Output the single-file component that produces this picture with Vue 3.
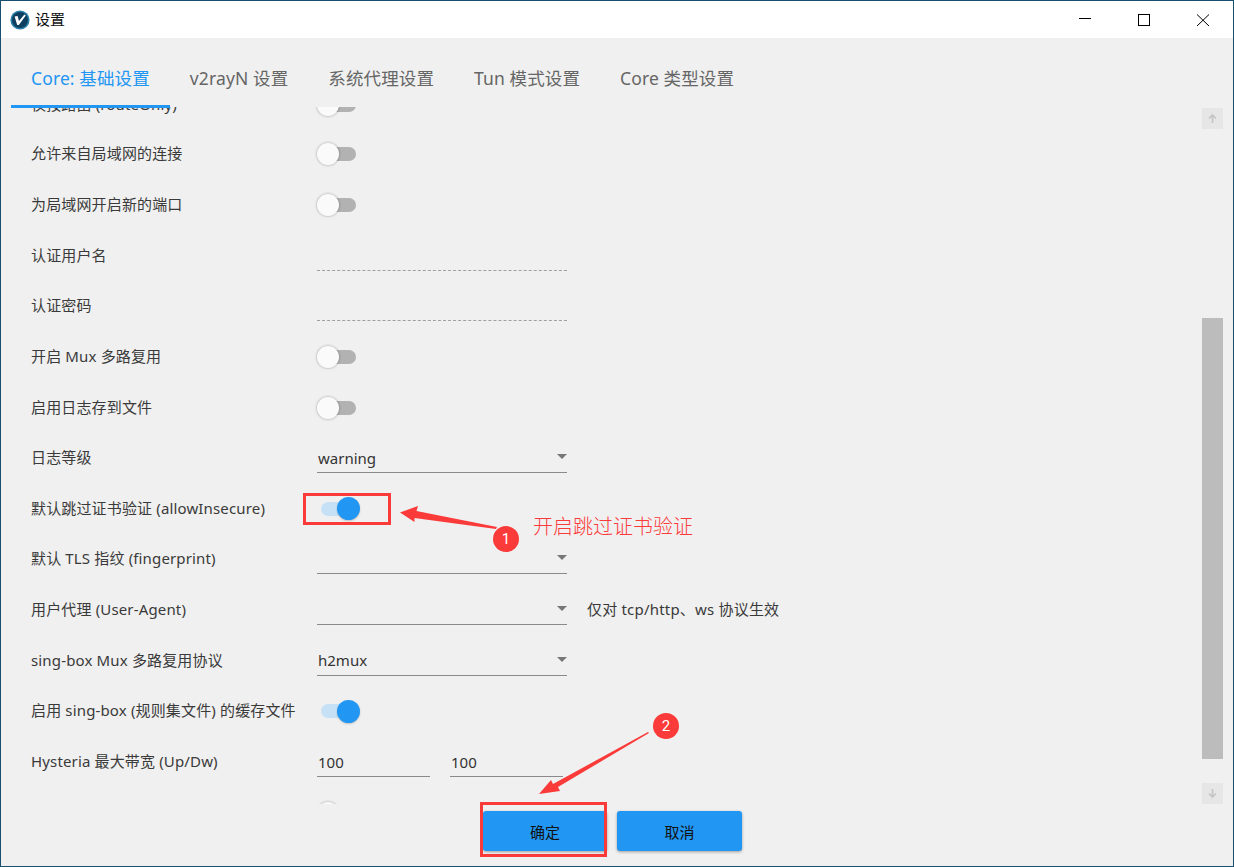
<script setup>
const tabs = ['Core: 基础设置', 'v2rayN 设置', '系统代理设置', 'Tun 模式设置', 'Core 类型设置']
const rows = [
  { label: '仅按路由 (routeOnly)', type: 'toggle', first: true },
  { label: '允许来自局域网的连接', type: 'toggle' },
  { label: '为局域网开启新的端口', type: 'toggle' },
  { label: '认证用户名', type: 'dashed' },
  { label: '认证密码', type: 'dashed' },
  { label: '开启 Mux 多路复用', type: 'toggle' },
  { label: '启用日志存到文件', type: 'toggle' },
  { label: '日志等级', type: 'select', value: 'warning' },
  { label: '默认跳过证书验证 (allowInsecure)', type: 'toggle', on: true },
  { label: '默认 TLS 指纹 (fingerprint)', type: 'select', value: '' },
  { label: '用户代理 (User-Agent)', type: 'select', value: '', note: '仅对 tcp/http、ws 协议生效' },
  { label: 'sing-box Mux 多路复用协议', type: 'select', value: 'h2mux' },
  { label: '启用 sing-box (规则集文件) 的缓存文件', type: 'toggle', on: true },
  { label: 'Hysteria 最大带宽 (Up/Dw)', type: 'pair', a: '100', b: '100' },
  { label: '', type: 'toggle' }
]
</script>

<template>
  <div class="window">
    <header class="titlebar">
      <svg class="logo" width="20" height="20" viewBox="0 0 20 20">
        <circle cx="10" cy="10" r="9.6" fill="#2a7fa8" />
        <circle cx="10" cy="10" r="8" fill="#0e3f60" />
        <path d="M4.6 6.6 L7.6 6 L9 11 L14.4 4.6 L15.8 5.6 L8.8 15 L7.2 15 Z" fill="#fff" />
      </svg>
      <span class="title">设置</span>
      <div class="controls">
        <svg width="14" height="14" viewBox="0 0 14 14" class="ctl-min"><path d="M1 5.5H13" stroke="#000" stroke-width="1" /></svg>
        <svg width="14" height="14" viewBox="0 0 14 14" class="ctl-max"><rect x="1.5" y="1.5" width="11" height="11" fill="none" stroke="#000" stroke-width="1" /></svg>
        <svg width="14" height="14" viewBox="0 0 14 14" class="ctl-close"><path d="M1 1.5L13 13M13 1.5L1 13" stroke="#000" stroke-width="1" /></svg>
      </div>
    </header>

    <nav class="tabs">
      <div v-for="(t, i) in tabs" :key="t" class="tab" :class="{ active: i === 0 }">{{ t }}</div>
    </nav>

    <main class="main">
      <div class="viewport">
        <div class="list">
          <div v-for="(r, i) in rows" :key="i" class="row" :class="{ first: r.first }">
            <div class="label">{{ r.label }}</div>
            <div v-if="r.type === 'toggle'" class="toggle" :class="{ on: r.on }"><span class="track"></span><span class="thumb"></span></div>
            <div v-else-if="r.type === 'dashed'" class="field dashed"></div>
            <template v-else-if="r.type === 'select'">
              <div class="field select"><span>{{ r.value }}</span><i class="caret"></i></div>
              <div v-if="r.note" class="note">{{ r.note }}</div>
            </template>
            <div v-else class="pair">
              <div class="field small"><span>{{ r.a }}</span></div>
              <div class="field small"><span>{{ r.b }}</span></div>
            </div>
          </div>
        </div>
      </div>
      <aside class="scrollbar">
        <div class="sb-btn">
          <svg width="11" height="11" viewBox="0 0 11 11"><path d="M5.5 10V2M2 5.5L5.5 2L9 5.5" fill="none" stroke="#c4c4c4" stroke-width="1.6" /></svg>
        </div>
        <div class="sb-track"><div class="sb-thumb"></div></div>
        <div class="sb-btn">
          <svg width="11" height="11" viewBox="0 0 11 11"><path d="M5.5 1V9M2 5.5L5.5 9L9 5.5" fill="none" stroke="#c4c4c4" stroke-width="1.6" /></svg>
        </div>
      </aside>
    </main>

    <footer class="footer">
      <button class="btn ok">确定</button>
      <button class="btn cancel">取消</button>
    </footer>

    <svg class="marks" width="1234" height="867" viewBox="0 0 1234 867">
      <rect x="304.5" y="494.5" width="85" height="29" fill="none" stroke="#fb3a3a" stroke-width="3" />
      <rect x="481.5" y="803.5" width="124" height="52" fill="none" stroke="#fb3a3a" stroke-width="3" />
      <path d="M400 512.5 L418 506 L416.5 511 L497 527 L496 529 L414.5 518 L414.5 522 Z" fill="#fb3a3a" />
      <path d="M539 794 L551 780 L553 784 L648 732 L649 733 L558 787 L560 791 Z" fill="#fb3a3a" />
      <circle cx="506" cy="539" r="13" fill="#fb3a3a" />
      <circle cx="666" cy="726" r="13" fill="#fb3a3a" />
      <text x="506" y="544" class="num">1</text>
      <text x="666" y="731" class="num">2</text>
    </svg>
    <div class="callout">开启跳过证书验证</div>
  </div>
</template>

<style>
html, body { margin: 0; background: #f0f0f0; }
</style>

<style scoped>
.window {
  position: relative;
  box-sizing: border-box;
  width: 1234px;
  height: 867px;
  display: flex;
  flex-direction: column;
  border: 1px solid #17506f;
  background: #f0f0f0;
  overflow: hidden;
  font-family: "Noto Sans", "Noto Sans CJK SC", sans-serif;
  font-size: 15px;
  color: #333;
}
.titlebar {
  flex: none;
  height: 37px;
  background: #fff;
  display: flex;
  align-items: center;
  padding-left: 9px;
}
.logo { flex: none; margin-right: 5px; }
.title { font-size: 15px; color: #111; position: relative; top: -1px; }
.controls {
  margin-left: auto;
  display: flex;
  align-items: center;
  margin-right: 23px;
  gap: 45px;
}
.tabs {
  flex: none;
  height: 69px;
  display: flex;
  position: relative;
  z-index: 1;
  padding-left: 10px;
}
.tab {
  padding: 0 20px;
  height: 69px;
  box-sizing: border-box;
  line-height: 80px;
  font-size: 17.5px;
  letter-spacing: 0.12px;
  color: #666;
  white-space: nowrap;
}
.tab.active {
  color: #2196f3;
  border-bottom: 3px solid #2196f3;
  margin-bottom: -1px;
  height: 70px;
}
.main {
  flex: 1;
  min-height: 0;
  display: flex;
}
.viewport {
  flex: 1;
  min-width: 0;
  overflow: hidden;
}
.list { margin-top: -26px; padding-left: 30px; }
.row {
  height: 50.65px;
  display: flex;
  align-items: center;
}
.row.first { height: 48px; }
.label {
  width: 286px;
  flex: none;
  white-space: nowrap;
  font-size: 15px;
  line-height: 20px;
  letter-spacing: 0.15px;
  margin-top: -2px;
  color: #3a3a3a;
}
.toggle {
  position: relative;
  width: 40px;
  height: 22px;
}
.track {
  position: absolute;
  left: 4px;
  top: 4px;
  width: 35px;
  height: 14px;
  border-radius: 7px;
  background: #b2b2b2;
}
.thumb {
  position: absolute;
  left: 0;
  top: 0;
  box-sizing: border-box;
  width: 22px;
  height: 22px;
  border-radius: 50%;
  background: #fafafa;
  box-shadow: 0 0 2px 1px rgba(0, 0, 0, 0.16);
}
.toggle.on .track { background: #c6e1f5; }
.toggle.on .thumb {
  left: 20px;
  top: -0.5px;
  width: 23px;
  height: 23px;
  background: #2196f3;
  box-shadow: 0 1px 2px rgba(0, 0, 0, 0.2);
}
.field {
  box-sizing: border-box;
  height: 30px;
  width: 250px;
  flex: none;
  display: flex;
  align-items: center;
  justify-content: space-between;
  border-bottom: 1px solid #8a8a8a;
  padding: 0 0 0 1px;
  font-size: 15px;
  color: #333;
}
.field.dashed { border-bottom: 1px dashed #a0a0a0; }
.field.small { width: 113px; }
.caret {
  width: 0;
  height: 0;
  border-left: 5.5px solid transparent;
  border-right: 5.5px solid transparent;
  border-top: 5.5px solid #777;
  margin-right: 0;
  position: relative;
  top: -1px;
}
.note { margin-left: 20px; font-size: 15px; line-height: 20px; letter-spacing: 0.2px; margin-top: -2px; color: #3a3a3a; white-space: nowrap; }
.pair { display: flex; gap: 20px; }
.scrollbar {
  flex: none;
  width: 21px;
  margin: 1px 10px 0 0;
  display: flex;
  flex-direction: column;
}
.sb-btn {
  flex: none;
  height: 21px;
  background: #e6e6e6;
  display: flex;
  align-items: center;
  justify-content: center;
}
.sb-track { flex: 1; min-height: 0; }
.sb-thumb { height: 441px; margin-top: 189px; background: #bcbcbc; }
.footer {
  flex: none;
  height: 62px;
  display: flex;
  gap: 10px;
  padding: 7px 0 0 482px;
  box-sizing: border-box;
}
.btn {
  height: 40px;
  border: 0;
  border-radius: 3px;
  background: #2196f3;
  color: #111;
  font-family: inherit;
  font-size: 15px;
  box-shadow: 0 1px 3px rgba(0, 0, 0, 0.35);
  padding: 0;
}
.btn.ok { width: 124px; }
.btn.cancel { width: 125px; }
.marks { position: absolute; left: -1px; top: -1px; pointer-events: none; }
.num { font-family: Roboto, sans-serif; font-size: 15px; fill: #fff; text-anchor: middle; }
.callout {
  position: absolute;
  left: 532px;
  top: 511px;
  font-size: 20px;
  line-height: 30px;
  font-weight: 300;
  color: #fb3a3a;
  white-space: nowrap;
}
</style>
